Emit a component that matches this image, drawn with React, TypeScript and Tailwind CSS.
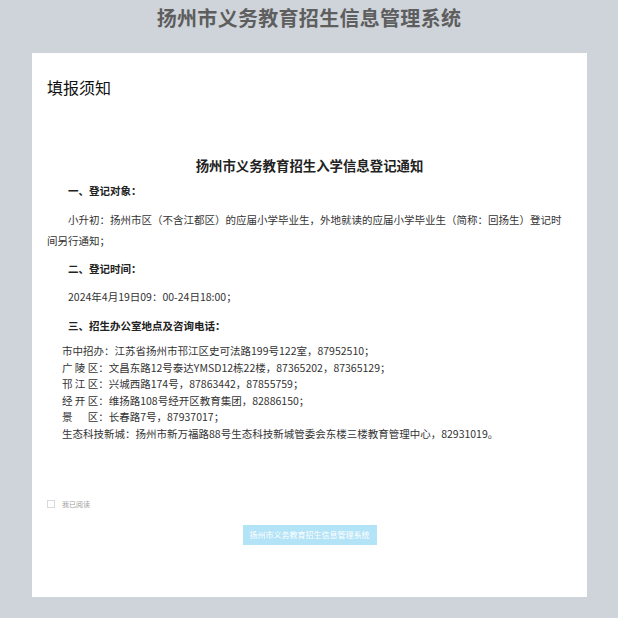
import React from "react";

const offices: { label: string; text: string }[] = [
  { label: "市中招办：", text: "江苏省扬州市邗江区史可法路199号122室，87952510；" },
  { label: "广 陵 区：", text: "文昌东路12号泰达YMSD12栋22楼，87365202，87365129；" },
  { label: "邗 江 区：", text: "兴城西路174号，87863442，87855759；" },
  { label: "经 开 区：", text: "维扬路108号经开区教育集团，82886150；" },
  { label: "景\u3000\u00a0\u00a0区：", text: "长春路7号，87937017；" },
  { label: "生态科技新城：", text: "扬州市新万福路88号生态科技新城管委会东楼三楼教育管理中心，82931019。" },
];

export default function App() {
  return (
    <div
      className="min-h-[618px] bg-[#cfd4db] pb-[21px]"
      style={{ fontFamily: '"Microsoft YaHei", "Noto Sans CJK SC", sans-serif' }}
    >
      <header className="flex h-[53px] items-start justify-center pt-[6px]">
        <h1 className="text-[20px] font-bold leading-[24px] tracking-[0.3px] text-[#5e5e5e]">
          扬州市义务教育招生信息管理系统
        </h1>
      </header>

      <main className="mx-[32px] mr-[31px] h-[544px] bg-white px-[15px] pt-[22px]">
        <h2 className="text-[16px] leading-[24px] text-[#111]">填报须知</h2>

        <div className="mt-[56px] text-[10.5px] text-[#333]">
          <h3 className="text-center text-[13.4px] font-bold leading-[21px] text-[#222]">
            扬州市义务教育招生入学信息登记通知
          </h3>

          <p className="mt-[4px] pl-[21px] font-bold leading-[21px] text-[#222]">一、登记对象：</p>
          <p className="mt-[8px] w-[520px] indent-[21px] leading-[21px]">
            小升初：扬州市区（不含江都区）的应届小学毕业生，外地就读的应届小学毕业生（简称：回扬生）登记时间另行通知；
          </p>

          <p className="mt-[7px] pl-[21px] font-bold leading-[21px] text-[#222]">二、登记时间：</p>
          <p className="mt-[7px] pl-[21px] leading-[21px]">2024年4月19日09：00-24日18:00；</p>

          <p className="mt-[8px] pl-[21px] font-bold leading-[21px] text-[#222]">三、招生办公室地点及咨询电话：</p>
          <ul className="mt-[7px] pl-[15px] leading-[16.6px]">
            {offices.map((o) => (
              <li key={o.label} className="whitespace-pre">
                {o.label}
                {o.text}
              </li>
            ))}
          </ul>
        </div>

        <label className="mt-[56px] flex items-center gap-[7px]">
          <span className="h-[8px] w-[8px] border border-[#d9d9d9] bg-white" />
          <span className="text-[7px] leading-[10px] text-[#a0a0a0]">我已阅读</span>
        </label>

        <div className="mt-[16px] flex justify-center">
          <button
            type="button"
            className="h-[20px] w-[134px] bg-[#b3e3f7] text-[8px] text-white"
          >
            扬州市义务教育招生信息管理系统
          </button>
        </div>
      </main>
    </div>
  );
}
